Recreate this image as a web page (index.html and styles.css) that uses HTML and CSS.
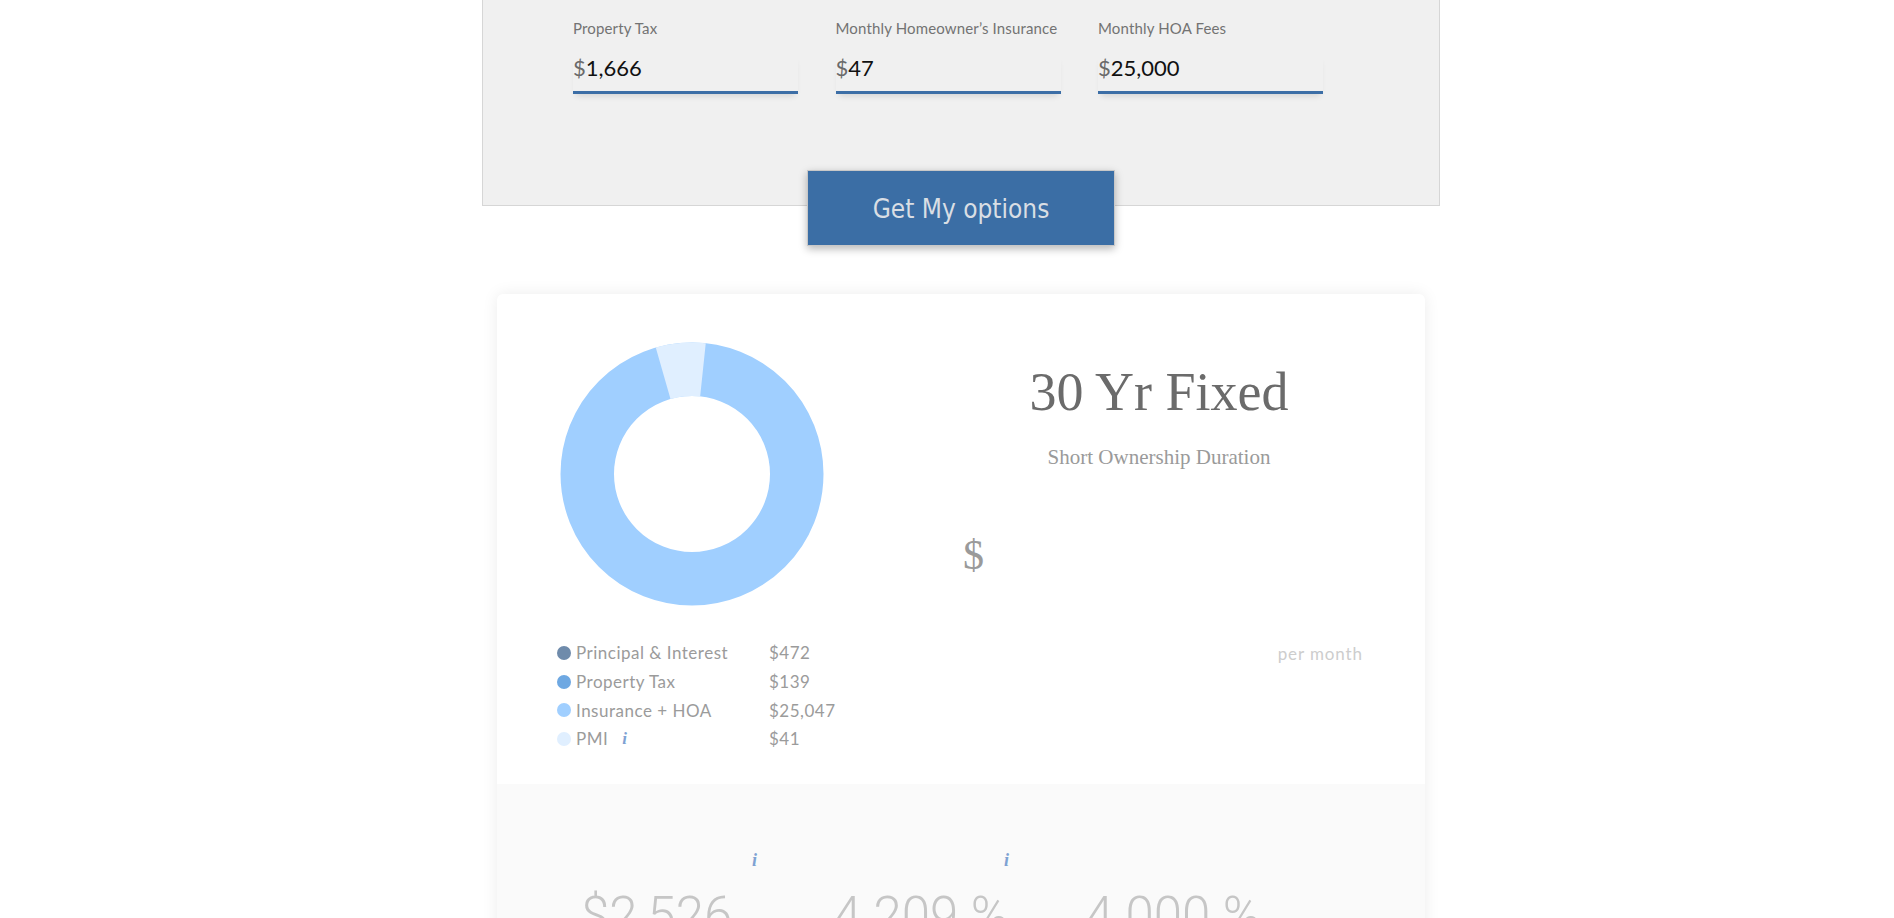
FILE: index.html
```html
<!DOCTYPE html>
<html lang="en">
<head>
<meta charset="utf-8">
<title>Mortgage options</title>
<link rel="stylesheet" href="styles.css">
</head>
<body>
<div class="page">
  <section class="inputs">
    <div class="fields">
      <div class="field">
        <div class="field-label">Property Tax</div>
        <div class="field-value"><span class="cur">$</span>1,666</div>
      </div>
      <div class="field">
        <div class="field-label">Monthly Homeowner’s Insurance</div>
        <div class="field-value"><span class="cur">$</span>47</div>
      </div>
      <div class="field">
        <div class="field-label">Monthly HOA Fees</div>
        <div class="field-value"><span class="cur">$</span>25,000</div>
      </div>
    </div>
  </section>
  <button class="cta" type="button">Get My options</button>

  <article class="card">
    <div class="card-top">
      <div class="chart-col">
        <svg class="donut" viewBox="0 0 264 264" width="264" height="264" aria-hidden="true">
          <circle cx="132" cy="132" r="104.75" fill="none" stroke="#a0cfff" stroke-width="53.5"/>
          <circle cx="132" cy="132" r="104.75" fill="none" stroke="#e0efff" stroke-width="53.5" stroke-dasharray="40.2 700" transform="rotate(-106 132 132)"/>
        </svg>
        <div class="legend">
          <div class="lg-name"><span class="dot dot-pi"></span>Principal &amp; Interest</div>
          <div class="lg-val">$472</div>
          <div class="lg-name"><span class="dot dot-tax"></span>Property Tax</div>
          <div class="lg-val">$139</div>
          <div class="lg-name"><span class="dot dot-ins"></span>Insurance + HOA</div>
          <div class="lg-val">$25,047</div>
          <div class="lg-name"><span class="dot dot-pmi"></span>PMI <span class="info info-pmi">i</span></div>
          <div class="lg-val">$41</div>
        </div>
      </div>
      <div class="summary-col">
        <div class="loan-head">
          <h2 class="loan-title">30 Yr Fixed</h2>
          <p class="loan-sub">Short Ownership Duration</p>
        </div>
        <div class="amount">$</div>
        <div class="per-month">per month</div>
      </div>
    </div>
    <div class="card-bottom">
      <div class="stat">
        <div class="stat-head"><span class="info">i</span></div>
        <div class="stat-num">$2,526</div>
      </div>
      <div class="stat">
        <div class="stat-head"><span class="info">i</span></div>
        <div class="stat-num">4.209 %</div>
      </div>
      <div class="stat">
        <div class="stat-head"></div>
        <div class="stat-num">4.000 %</div>
      </div>
    </div>
  </article>
</div>
</body>
</html>
```

FILE: styles.css
```css
html, body {
  margin: 0;
  padding: 0;
  overflow: hidden;
  background: #ffffff;
}

.page {
  width: 1922px;
  font-family: Lato, "Open Sans", sans-serif;
}

/* ---------- input panel ---------- */
.inputs {
  width: 958px;
  box-sizing: border-box;
  margin: 0 auto;
  background: #f0f0f0;
  border: 1px solid #d6d6d6;
  border-top: none;
  padding: 19px 0 111px 90px;
}

.fields {
  display: flex;
  gap: 37.5px;
}

.field {
  width: 225px;
}

.field-label {
  font-size: 15px;
  line-height: 18.5px;
  letter-spacing: 0.15px;
  color: #737373;
  margin-bottom: 16.5px;
}

.field-value {
  font-size: 22px;
  line-height: 27px;
  color: #111;
  padding-bottom: 10px;
  border-bottom: 3px solid #3c6ea6;
  box-shadow: 0 5px 6px -3px rgba(0, 0, 0, 0.12);
}

.cur {
  color: #6a6a6a;
}

.cta {
  display: flex;
  align-items: center;
  justify-content: center;
  position: relative;
  width: 308px;
  height: 76px;
  margin: -36px auto 0;
  padding: 2px 0 0;
  background: #3b6ea5;
  border: 1px solid #c8c8c8;
  box-shadow: 0 3px 8px rgba(0, 0, 0, 0.28);
  color: #d9dee4;
  font-family: "DejaVu Sans Condensed", "DejaVu Sans", sans-serif;
  font-stretch: condensed;
  font-size: 26px;
  cursor: pointer;
}

/* ---------- result card ---------- */
.card {
  width: 928px;
  margin: 48px auto 0;
  background: #fff;
  border-radius: 6px;
  box-shadow: 0 0 16px rgba(0, 0, 0, 0.08);
  overflow: hidden;
}

.card-top {
  display: flex;
  padding: 48px 61px 31px 60px;
}

.chart-col {
  width: 406px;
}

.donut {
  display: block;
  margin-left: 3px;
}

.legend {
  display: grid;
  grid-template-columns: 212px auto;
  grid-auto-rows: 28.7px;
  margin-top: 32.5px;
  font-size: 17px;
  letter-spacing: 0.5px;
  color: #9b9b9b;
}

.lg-name,
.lg-val {
  display: flex;
  align-items: center;
}

.dot {
  width: 14px;
  height: 14px;
  border-radius: 50%;
  margin-right: 5px;
  flex: none;
}

.dot-pi { background: #6f8bab; }
.dot-tax { background: #6ea8e2; }
.dot-ins { background: #a0cfff; }
.dot-pmi { background: #e0efff; }

.info {
  font-family: "Liberation Serif", serif;
  font-style: italic;
  font-weight: bold;
  font-size: 18px;
  line-height: 20px;
  letter-spacing: 0;
  color: #7ea2d3;
}

.info-pmi {
  margin-left: 14px;
  font-size: 17px;
}

.summary-col {
  width: 400px;
  text-align: center;
  font-family: "Liberation Serif", serif;
}

.loan-head {
  padding-right: 8px;
}

.loan-title {
  margin: 18.5px 0 0;
  font-size: 54px;
  line-height: 62px;
  font-weight: normal;
  color: #6b6b6b;
}

.loan-sub {
  margin: 22px 0 0;
  font-size: 21px;
  line-height: 24px;
  color: #9a9a9a;
}

.amount {
  margin-top: 62.5px;
  text-align: left;
  font-size: 42px;
  line-height: 48px;
  color: #9a9a9a;
}

.per-month {
  margin-top: 64.5px;
  text-align: right;
  font-family: Lato, sans-serif;
  font-size: 17px;
  line-height: 20px;
  letter-spacing: 0.9px;
  color: #cdcdcd;
}

.card-bottom {
  display: flex;
  background: #fafafa;
  padding: 66px 0 80px 84px;
}

.stat {
  width: 252px;
}

.stat-head {
  height: 20px;
  padding-left: 171px;
}

.stat-num {
  margin-top: 16px;
  font-family: Roboto, sans-serif;
  font-weight: 300;
  font-size: 51px;
  line-height: 60px;
  color: #c6c6c6;
}
```
